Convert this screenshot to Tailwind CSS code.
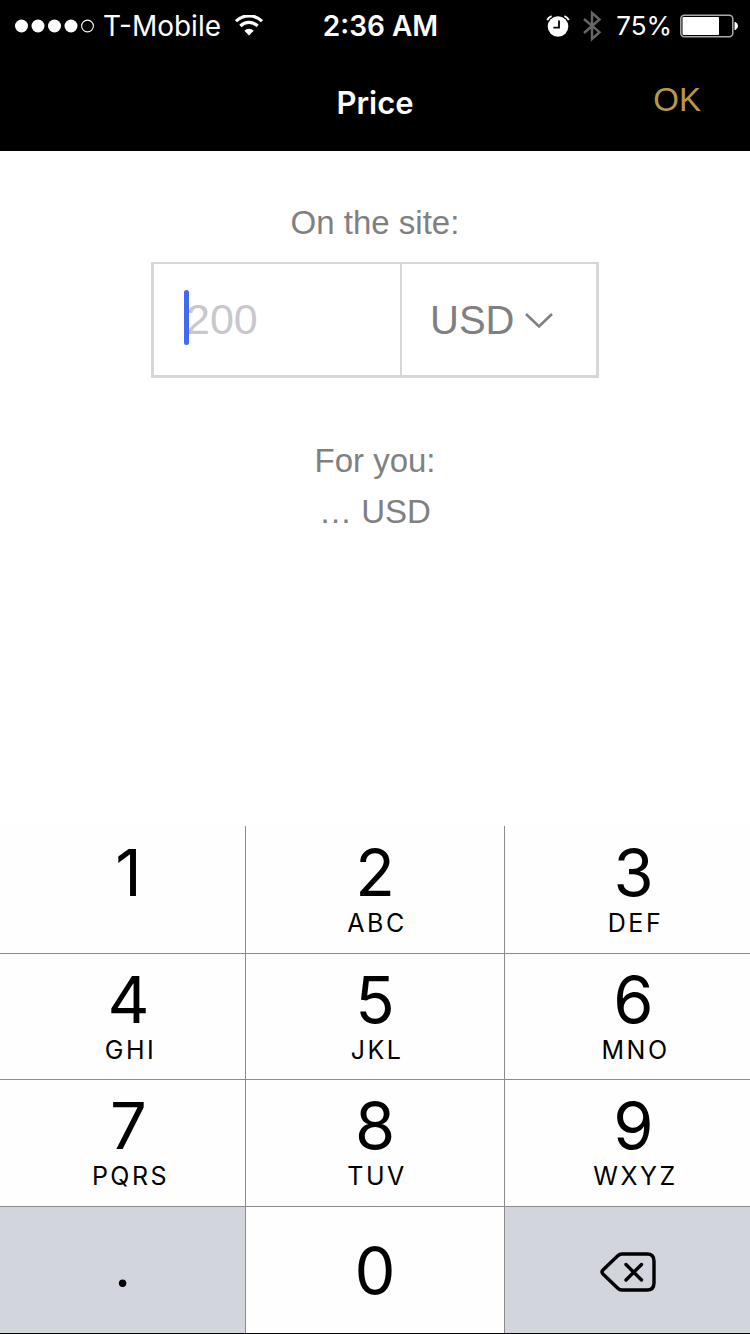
<!DOCTYPE html>
<html lang="en">
<head>
    <meta charset="UTF-8">
    <meta name="viewport" content="width=device-width, initial-scale=1.0">
    <title>Price</title>
    <!-- Tailwind CSS CDN -->
    <script src="https://cdn.jsdelivr.net/npm/@tailwindcss/browser@4"></script>
</head>
<body class="min-h-screen flex flex-col bg-white font-['Liberation_Sans',Arial,sans-serif]">
    <header class="bg-black text-white">
        <!-- Status bar -->
        <div class="grid grid-cols-[1fr_auto_1fr] items-center h-[51px] pl-[15px] pr-3 text-[28px] font-['Inter',sans-serif]">
            <div class="flex items-center">
                <svg class="w-20 h-[14px]" viewBox="0 0 80 14" fill="white" aria-hidden="true">
                    <circle cx="6.5" cy="7" r="6.5"/>
                    <circle cx="23" cy="7" r="6.5"/>
                    <circle cx="39.5" cy="7" r="6.5"/>
                    <circle cx="56" cy="7" r="6.5"/>
                    <circle cx="72.5" cy="7" r="5.9" fill="none" stroke="white" stroke-width="1.1"/>
                </svg>
                <span class="ml-2">T-Mobile</span>
                <svg class="ml-[14px] w-[28px] h-[22px]" viewBox="0 0 28 22" fill="none" stroke="white" aria-hidden="true">
                    <path d="M1 6.2a18.5 18.5 0 0 1 26 0" stroke-width="3.2"/>
                    <path d="M5.4 11a12.2 12.2 0 0 1 17.2 0" stroke-width="3.2"/>
                    <path d="M14 20.6l-4.7-4.9a6.7 6.7 0 0 1 9.4 0z" fill="white" stroke="none"/>
                </svg>
            </div>
            <span class="pl-2 font-semibold">2:36 AM</span>
            <div class="flex items-center justify-end">
                <svg class="w-6 h-6" viewBox="0 0 24 24" fill="none" aria-hidden="true">
                    <circle cx="12" cy="12.5" r="10.3" fill="white"/>
                    <path d="M1.2 6.1A8 8 0 0 1 5.6 2.1M22.8 6.1a8 8 0 0 0-4.4-4" stroke="white" stroke-width="2"/>
                    <path d="M13 6.5v7.2H7.4" stroke="black" stroke-width="1.8"/>
                </svg>
                <svg class="ml-3 w-[20px] h-8" viewBox="0 0 20 32" fill="none" stroke="#666" stroke-width="2.4" aria-hidden="true">
                    <path d="M2 9l15.5 13.2L10 29V3l7.5 6.5L2 23"/>
                </svg>
                <span class="ml-[14px] text-[26px]">75%</span>
                <svg class="ml-2 w-[58px] h-6" viewBox="0 0 58 24" aria-hidden="true">
                    <rect x=".8" y="1.3" width="52" height="21.4" rx="3.5" fill="none" stroke="#aaa" stroke-width="1.5"/>
                    <rect x="2.5" y="3" width="36.5" height="18" rx="1" fill="white"/>
                    <path d="M54.5 8h1q2.5 1.5 2.5 4t-2.5 4h-1z" fill="white"/>
                </svg>
            </div>
        </div>

        <!-- Title bar -->
        <div class="grid grid-cols-[1fr_auto_1fr] items-center h-[100px] px-[49px]">
            <h1 class="col-start-2 pt-1 text-[31px] font-semibold font-['Inter',sans-serif]">Price</h1>
            <button type="button" class="justify-self-end pb-[2px] text-[33px] text-[#b8964b]">OK</button>
        </div>
    </header>

    <main class="flex flex-col items-center px-6 pt-[53px] text-[33px] leading-[38px] text-[#808080]">
        <label for="price">On the site:</label>
        <div class="flex w-full max-w-[448px] h-[116px] mt-5 border-x-3 border-t-2 border-b-3 border-[#d7d7d7]">
            <div class="relative flex w-[246px]">
                <input id="price" type="text" inputmode="decimal" placeholder="200" class="w-full pl-[32px] text-[43px] outline-none placeholder:text-[#c7c7cd]">
                <span class="absolute left-[30px] top-[26px] w-[5px] h-[55px] rounded-sm bg-[#4169f3]"></span>
            </div>
            <div class="relative flex flex-1 border-l-2 border-[#d7d7d7]">
                <select aria-label="Currency" class="w-full pl-[28px] appearance-none text-[40px] outline-none">
                    <option>USD</option>
                    <option>EUR</option>
                </select>
                <svg class="absolute right-[42px] top-[48px] w-[30px] h-[18px] pointer-events-none" viewBox="0 0 30 18" fill="none" stroke="#808080" stroke-width="2.6" aria-hidden="true">
                    <path d="M2 2l13 12.5L28 2"/>
                </svg>
            </div>
        </div>
        <p class="mt-16">For you:</p>
        <p class="mt-[13px]">… USD</p>
    </main>

    <!-- Keypad -->
    <div class="mt-auto grid grid-cols-[49fr_52fr_49fr] grid-rows-[127px_126px_127px_127px] border-b border-black bg-[#fefefe] text-black text-[65px] leading-[65px] font-['Inter',sans-serif]">
        <button type="button" class="flex flex-col items-center pt-[14px] pl-3">1</button>
        <button type="button" class="flex flex-col items-center pt-[14px] border-x border-[#8c8c8c]">2<span class="mt-[5px] pl-1 text-[25px] leading-[26px] tracking-widest">ABC</span></button>
        <button type="button" class="flex flex-col items-center pt-[14px] pl-3">3<span class="mt-[5px] pl-1 text-[25px] leading-[26px] tracking-widest">DEF</span></button>

        <button type="button" class="flex flex-col items-center pt-[13px] pl-3 border-t border-[#8c8c8c]">4<span class="mt-[5px] pl-1 text-[25px] leading-[26px] tracking-widest">GHI</span></button>
        <button type="button" class="flex flex-col items-center pt-[13px] border-x border-t border-[#8c8c8c]">5<span class="mt-[5px] pl-1 text-[25px] leading-[26px] tracking-widest">JKL</span></button>
        <button type="button" class="flex flex-col items-center pt-[13px] pl-3 border-t border-[#8c8c8c]">6<span class="mt-[5px] pl-1 text-[25px] leading-[26px] tracking-widest">MNO</span></button>

        <button type="button" class="flex flex-col items-center pt-[13px] pl-3 border-t border-[#8c8c8c]">7<span class="mt-[5px] pl-1 text-[25px] leading-[26px] tracking-widest">PQRS</span></button>
        <button type="button" class="flex flex-col items-center pt-[13px] border-x border-t border-[#8c8c8c]">8<span class="mt-[5px] pl-1 text-[25px] leading-[26px] tracking-widest">TUV</span></button>
        <button type="button" class="flex flex-col items-center pt-[13px] pl-3 border-t border-[#8c8c8c]">9<span class="mt-[5px] pl-1 text-[25px] leading-[26px] tracking-widest">WXYZ</span></button>

        <button type="button" class="flex items-center justify-center pb-3 border-t border-[#8c8c8c] bg-[#d2d5dc] text-[60px] font-['Lato',sans-serif]">.</button>
        <button type="button" class="flex items-center justify-center border-x border-t border-[#8c8c8c]">0</button>
        <button type="button" aria-label="Delete" class="flex items-center justify-center pt-1 border-t border-[#8c8c8c] bg-[#d2d5dc]">
            <svg class="w-14 h-10" viewBox="0 0 56 40" fill="none" stroke="black" stroke-width="3.4" stroke-linecap="round" stroke-linejoin="round" aria-hidden="true">
                <path d="M22 2h25q7 0 7 7v22q0 7-7 7H22q-2.500 0-4.500-2L3 22q-2-2 0-4L17.500 4q2-2 4.500-2z"/>
                <path d="M26 12.500l15.500 15.500M41.500 12.500l-15.500 15.500"/>
            </svg>
        </button>
    </div>
</body>
</html>
